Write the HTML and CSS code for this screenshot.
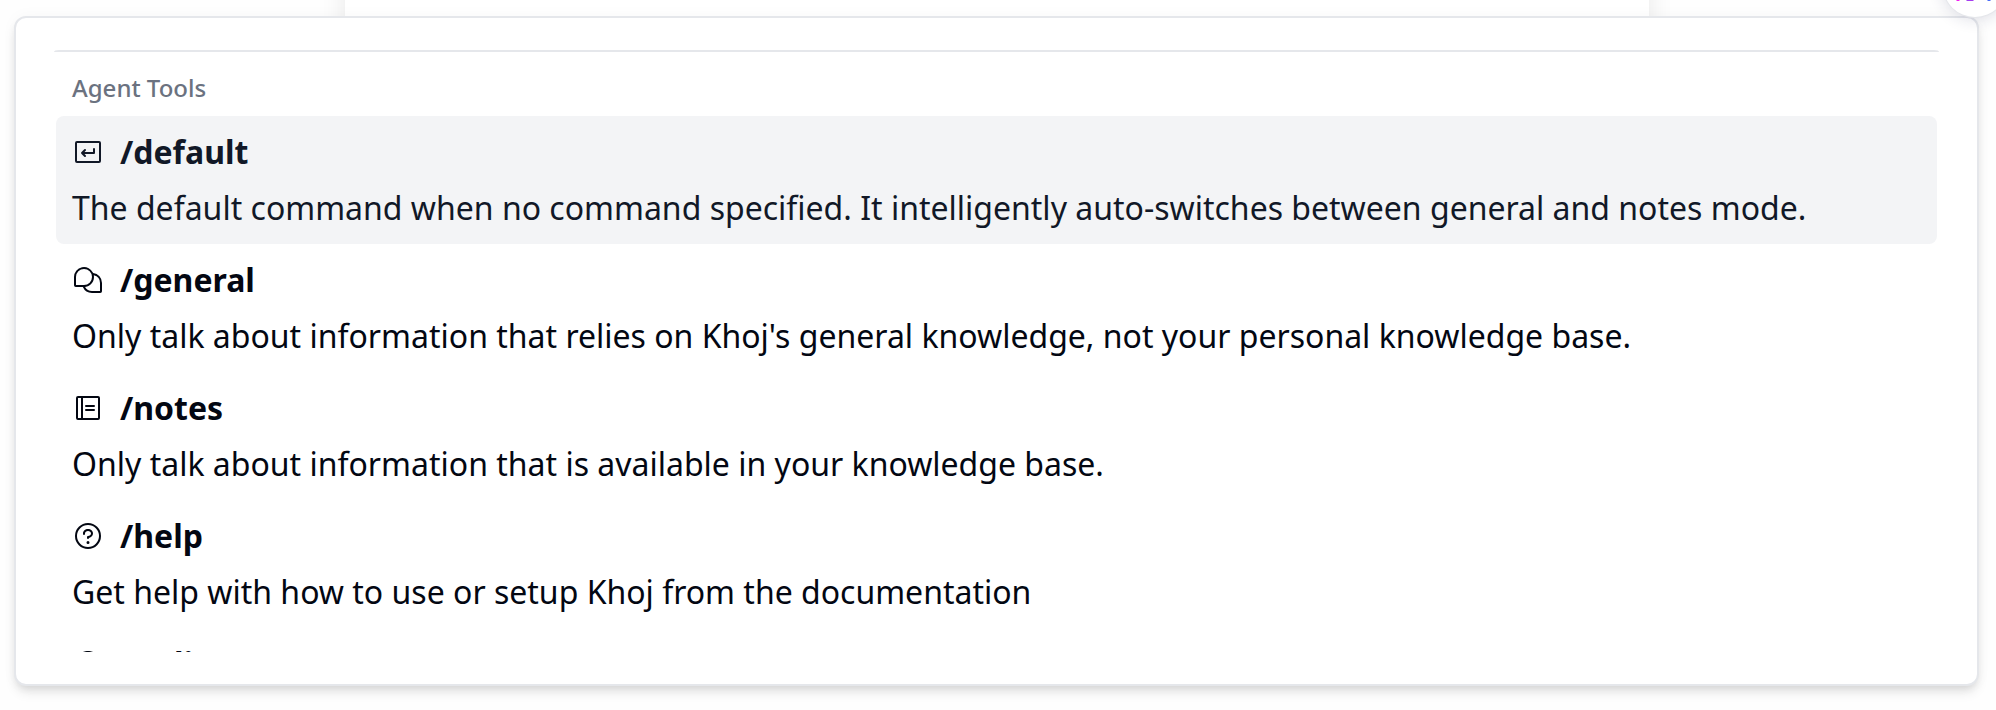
FILE: index.html
```html
<!DOCTYPE html>
<html lang="en">
<head>
<meta charset="utf-8">
<title>Agent Tools</title>
<link rel="stylesheet" href="styles.css">
</head>
<body>
<div class="backdrop"></div>
<main class="popover">
  <div class="list">
    <div class="separator"></div>
    <div class="group">
      <h2 class="heading">Agent Tools</h2>
      <div class="item selected">
        <div class="title"><svg class="icon line" viewBox="0 0 256 256"><rect x="32" y="48" width="192" height="160" rx="8"/><path d="M104 112 80 136l24 24M80 136h96v-32"/></svg><span>/default</span></div>
        <div class="desc">The default command when no command specified. It intelligently auto-switches between general and notes mode.</div>
      </div>
      <div class="item">
        <div class="title"><svg class="icon" viewBox="0 0 256 256"><path d="M169.57,72.59A80,80,0,0,0,16,104v66a14,14,0,0,0,14,14H86.67A80.15,80.15,0,0,0,160,232h66a14,14,0,0,0,14-14V152A80,80,0,0,0,169.57,72.59ZM32,104a64,64,0,1,1,64,64H32ZM224,216H160a64.14,64.14,0,0,1-55.68-32.43A80,80,0,0,0,174.7,89.71,64,64,0,0,1,224,152Z"/></svg><span>/general</span></div>
        <div class="desc">Only talk about information that relies on Khoj's general knowledge, not your personal knowledge base.</div>
      </div>
      <div class="item">
        <div class="title"><svg class="icon line" viewBox="0 0 256 256"><rect x="40" y="40" width="176" height="176" rx="8"/><path d="M80 40v176M112 112h64M112 144h64"/></svg><span>/notes</span></div>
        <div class="desc">Only talk about information that is available in your knowledge base.</div>
      </div>
      <div class="item">
        <div class="title"><svg class="icon" viewBox="0 0 256 256"><path d="M140,180a12,12,0,1,1-12-12A12,12,0,0,1,140,180ZM128,72c-22.06,0-40,16.15-40,36v4a8,8,0,0,0,16,0v-4c0-11,10.77-20,24-20s24,9,24,20-10.77,20-24,20a8,8,0,0,0-8,8v8a8,8,0,0,0,16,0v-.72c18.24-3.35,32-17.9,32-35.28C168,88.15,150.06,72,128,72Zm104,56A104,104,0,1,1,128,24,104.11,104.11,0,0,1,232,128Zm-16,0a88,88,0,1,0-88,88A88.1,88.1,0,0,0,216,128Z"/></svg><span>/help</span></div>
        <div class="desc">Get help with how to use or setup Khoj from the documentation</div>
      </div>
      <div class="item">
        <div class="title"><svg class="icon line" viewBox="0 0 256 256"><circle cx="128" cy="128" r="96"/><ellipse cx="128" cy="128" rx="40" ry="96"/><path d="M38 96h180M38 160h180"/></svg><span>/online</span></div>
      </div>
    </div>
  </div>
</main>
<div class="bubble">
  <svg class="mark" viewBox="0 0 40 9"><path class="pink" d="M2 0v9"/><path class="violet" d="M12 0v9h4v-9"/><path class="blue" d="M33 0v9"/></svg>
</div>
</body>
</html>
```
FILE: styles.css
```css
* { box-sizing: border-box; }

body {
  margin: 0;
  height: 710px;
  padding: 16px 17px 24px 14px;
  overflow: hidden;
  position: relative;
  background: #fefefe;
  color: #030712;
  font-family: "Noto Sans", sans-serif;
}

/* Page card that shows above the popover */
.backdrop {
  position: absolute;
  left: 345px;
  top: -40px;
  width: 1304px;
  height: 400px;
  background: #fff;
  box-shadow: 0 8px 24px rgba(0, 0, 0, .09);
}

.popover {
  position: relative;
  height: 670px;
  padding: 32px 38px;
  border: 2px solid #e5e7eb;
  border-radius: 12px;
  background: #fff;
  box-shadow: 0 8px 12px -2px rgba(0, 0, 0, .1), 0 4px 8px -4px rgba(0, 0, 0, .1), 0 0 16px rgba(0, 0, 0, .03);
}

.list {
  height: 602px;
  overflow: hidden;
}

.separator {
  height: 2px;
  border-radius: 5px 5px 0 0 / 2px 2px 0 0;
  background: #e5e7eb;
}

.group { padding: 8px 2px; }

.heading {
  margin: 0;
  padding: 12px 16px;
  font-size: 24px;
  line-height: 32px;
  font-weight: 500;
  color: #6b7280;
}

.item {
  height: 128px;
  padding: 12px 16px;
  border-radius: 8px;
  font-size: 32px;
  line-height: 48px;
  white-space: nowrap;
}

.selected {
  background: #f3f4f6;
  color: #111827;
}

.title {
  display: flex;
  align-items: center;
  gap: 16px;
  margin-bottom: 8px;
  font-weight: 700;
}

.icon {
  width: 32px;
  height: 32px;
  fill: currentColor;
}

.line {
  fill: none;
  stroke: currentColor;
  stroke-width: 16;
  stroke-linecap: round;
  stroke-linejoin: round;
}

/* Floating extension button in the corner */
.bubble {
  position: absolute;
  left: 1943px;
  top: -47px;
  width: 64px;
  height: 64px;
  padding: 39px 0 0 13px;
  border-radius: 50%;
  background: #fff;
  box-shadow: 0 0 0 1px #e5e7eb, 0 2px 16px rgba(30, 40, 90, .16);
}

.mark {
  display: block;
  width: 40px;
  height: 9px;
  fill: none;
  stroke-width: 3;
}

.pink { stroke: #f01cf0; }
.violet { stroke: #a63cf0; }
.blue { stroke: #4a6cf7; }
```
